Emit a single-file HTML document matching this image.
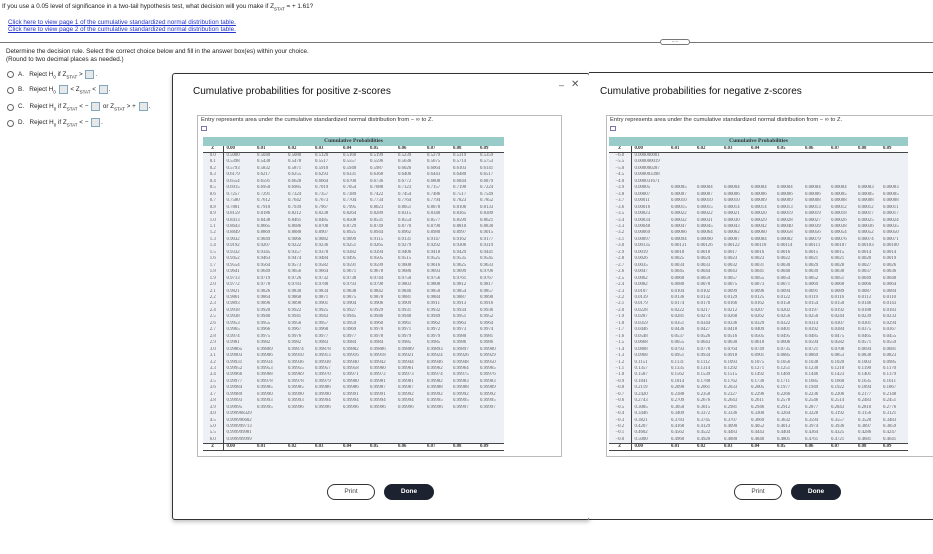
<!DOCTYPE html>
<html><head><meta charset="utf-8">
<style>
*{margin:0;padding:0;box-sizing:border-box}
body{width:933px;height:554px;background:#fff;position:relative;overflow:hidden;font-family:"Liberation Sans",sans-serif;color:#222}
.a{position:absolute;white-space:nowrap}
.t{font-size:6.3px}
.lnk{color:#2233cc;text-decoration:underline;font-size:6.3px}
.rad{position:absolute;width:7px;height:7px;border:1px solid #666;border-radius:50%}
.box{display:inline-block;width:9px;height:9px;border:1px solid #7fa8c0;background:#e8e8e8;vertical-align:middle;margin:0 1px}
sub{font-size:4.5px}
.win{position:absolute;border:1px solid #333;background:#fff;border-radius:3px;box-shadow:0 2px 4px rgba(0,0,0,.25)}
.ttl{font-size:10px;color:#111}
.entry{position:absolute;border:1px solid #bbb;background:#fff}
.band{position:absolute;background:#99cbc9;font-family:"Liberation Serif",serif;font-weight:bold;font-size:5.5px;text-align:center;line-height:9px;color:#333}
table{position:absolute;border-collapse:collapse;table-layout:fixed;font-family:"Liberation Serif",serif;font-size:4.8px;color:#555}
td{height:6.45px;line-height:6.45px;padding:0;white-space:nowrap;overflow:hidden}
td:first-child{text-align:center;border-right:1px solid #444}
td:nth-child(2){padding-left:3px}
tbody{background:#edf1f5}
thead td,tfoot td{height:6px;line-height:6px;font-weight:bold;color:#333;background:#fff}
thead tr{border-bottom:1px solid #444}
tfoot tr{border-top:1px solid #444;border-bottom:1px solid #444}
tfoot td{height:7px}
.btn{position:absolute;height:16px;border-radius:8px;font-size:6.5px;text-align:center;line-height:14px}
.pr{border:1px solid #333;background:#fff;color:#444}
.dn{background:#1c2230;color:#fff;font-weight:bold;line-height:16px}
</style></head><body>

<div class="a t" style="left:2px;top:3px">If you use a 0.05 level of significance in a two-tail hypothesis test, what decision will you make if Z<sub>STAT</sub> = + 1.61?</div>
<div class="a lnk" style="left:8px;top:19px">Click here to view page 1 of the cumulative standardized normal distribution table.</div>
<div class="a lnk" style="left:8px;top:26px">Click here to view page 2 of the cumulative standardized normal distribution table.</div>
<div class="a" style="left:0;top:42px;width:660px;height:1px;background:#777"></div>
<div class="a" style="left:660px;top:39px;width:30px;height:6px;border:1px solid #777;border-radius:3px;font-size:5px;line-height:3px;text-align:center;color:#555">.....</div>
<div class="a" style="left:690px;top:42px;width:243px;height:1px;background:#777"></div>

<div class="a t" style="left:6px;top:48px">Determine the decision rule. Select the correct choice below and fill in the answer box(es) within your choice.</div>
<div class="a t" style="left:6px;top:56px">(Round to two decimal places as needed.)</div>

<div class="rad" style="left:7px;top:71px"></div>
<div class="a t" style="left:18px;top:70px;line-height:10px">A.&nbsp;&nbsp;&nbsp;Reject H<sub>0</sub> if Z<sub>STAT</sub> &gt; <span class="box"></span>.</div>
<div class="rad" style="left:7px;top:87px"></div>
<div class="a t" style="left:18px;top:85px;line-height:10px">B.&nbsp;&nbsp;&nbsp;Reject H<sub>0</sub> <span class="box"></span> &lt; Z<sub>STAT</sub> &lt; <span class="box"></span>.</div>
<div class="rad" style="left:7px;top:104px"></div>
<div class="a t" style="left:18px;top:102px;line-height:10px">C.&nbsp;&nbsp;&nbsp;Reject H<sub>0</sub> if Z<sub>STAT</sub> &lt; &minus; <span class="box"></span> or Z<sub>STAT</sub> &gt; + <span class="box"></span>.</div>
<div class="rad" style="left:7px;top:120px"></div>
<div class="a t" style="left:18px;top:118px;line-height:10px">D.&nbsp;&nbsp;&nbsp;Reject H<sub>0</sub> if Z<sub>STAT</sub> &lt; &minus; <span class="box"></span>.</div>

<!-- left window -->
<div class="win" style="left:172px;top:73px;width:418px;height:447px"></div>
<div class="a" style="left:559px;top:80px;font-size:9px;color:#555">&ndash;</div>
<div class="a" style="left:571px;top:79px;font-size:10px;color:#555">&#x2715;</div>
<div class="a ttl" style="left:193px;top:86px">Cumulative probabilities for positive z-scores</div>
<div class="entry" style="left:197px;top:115px;width:365px;height:342px"></div>
<div class="a" style="left:201px;top:117px;font-size:5.8px;color:#333">Entry represents area under the cumulative standardized normal distribution from &minus; &infin; to Z.</div>
<div class="a" style="left:201px;top:126px;width:6px;height:5px;border:1px solid #77a"></div>
<div class="band" style="left:203px;top:137px;width:301px;height:9px">Cumulative Probabilities</div>
<table style="left:203px;top:146px;width:301px">
<colgroup><col style="width:20px"><col style="width:34px"><col style="width:31px"><col style="width:27px"><col style="width:28px"><col style="width:27px"><col style="width:28px"><col style="width:29px"><col style="width:26px"><col style="width:27px"><col style="width:24px"></colgroup>
<thead><tr><td>Z</td><td>0.00</td><td>0.01</td><td>0.02</td><td>0.03</td><td>0.04</td><td>0.05</td><td>0.06</td><td>0.07</td><td>0.08</td><td>0.09</td></tr></thead>
<tbody>
<tr><td>0.0</td><td>0.5000</td><td>0.5040</td><td>0.5080</td><td>0.5120</td><td>0.5160</td><td>0.5199</td><td>0.5239</td><td>0.5279</td><td>0.5319</td><td>0.5359</td></tr>
<tr><td>0.1</td><td>0.5398</td><td>0.5438</td><td>0.5478</td><td>0.5517</td><td>0.5557</td><td>0.5596</td><td>0.5636</td><td>0.5675</td><td>0.5714</td><td>0.5753</td></tr>
<tr><td>0.2</td><td>0.5793</td><td>0.5832</td><td>0.5871</td><td>0.5910</td><td>0.5948</td><td>0.5987</td><td>0.6026</td><td>0.6064</td><td>0.6103</td><td>0.6141</td></tr>
<tr><td>0.3</td><td>0.6179</td><td>0.6217</td><td>0.6255</td><td>0.6293</td><td>0.6331</td><td>0.6368</td><td>0.6406</td><td>0.6443</td><td>0.6480</td><td>0.6517</td></tr>
<tr><td>0.4</td><td>0.6554</td><td>0.6591</td><td>0.6628</td><td>0.6664</td><td>0.6700</td><td>0.6736</td><td>0.6772</td><td>0.6808</td><td>0.6844</td><td>0.6879</td></tr>
<tr><td>0.5</td><td>0.6915</td><td>0.6950</td><td>0.6985</td><td>0.7019</td><td>0.7054</td><td>0.7088</td><td>0.7123</td><td>0.7157</td><td>0.7190</td><td>0.7224</td></tr>
<tr><td>0.6</td><td>0.7257</td><td>0.7291</td><td>0.7324</td><td>0.7357</td><td>0.7389</td><td>0.7422</td><td>0.7454</td><td>0.7486</td><td>0.7517</td><td>0.7549</td></tr>
<tr><td>0.7</td><td>0.7580</td><td>0.7612</td><td>0.7642</td><td>0.7673</td><td>0.7704</td><td>0.7734</td><td>0.7764</td><td>0.7794</td><td>0.7823</td><td>0.7852</td></tr>
<tr><td>0.8</td><td>0.7881</td><td>0.7910</td><td>0.7939</td><td>0.7967</td><td>0.7995</td><td>0.8023</td><td>0.8051</td><td>0.8078</td><td>0.8106</td><td>0.8133</td></tr>
<tr><td>0.9</td><td>0.8159</td><td>0.8186</td><td>0.8212</td><td>0.8238</td><td>0.8264</td><td>0.8289</td><td>0.8315</td><td>0.8340</td><td>0.8365</td><td>0.8389</td></tr>
<tr><td>1.0</td><td>0.8413</td><td>0.8438</td><td>0.8461</td><td>0.8485</td><td>0.8508</td><td>0.8531</td><td>0.8554</td><td>0.8577</td><td>0.8599</td><td>0.8621</td></tr>
<tr><td>1.1</td><td>0.8643</td><td>0.8665</td><td>0.8686</td><td>0.8708</td><td>0.8729</td><td>0.8749</td><td>0.8770</td><td>0.8790</td><td>0.8810</td><td>0.8830</td></tr>
<tr><td>1.2</td><td>0.8849</td><td>0.8869</td><td>0.8888</td><td>0.8907</td><td>0.8925</td><td>0.8944</td><td>0.8962</td><td>0.8980</td><td>0.8997</td><td>0.9015</td></tr>
<tr><td>1.3</td><td>0.9032</td><td>0.9049</td><td>0.9066</td><td>0.9082</td><td>0.9099</td><td>0.9115</td><td>0.9131</td><td>0.9147</td><td>0.9162</td><td>0.9177</td></tr>
<tr><td>1.4</td><td>0.9192</td><td>0.9207</td><td>0.9222</td><td>0.9236</td><td>0.9251</td><td>0.9265</td><td>0.9279</td><td>0.9292</td><td>0.9306</td><td>0.9319</td></tr>
<tr><td>1.5</td><td>0.9332</td><td>0.9345</td><td>0.9357</td><td>0.9370</td><td>0.9382</td><td>0.9394</td><td>0.9406</td><td>0.9418</td><td>0.9429</td><td>0.9441</td></tr>
<tr><td>1.6</td><td>0.9452</td><td>0.9463</td><td>0.9474</td><td>0.9484</td><td>0.9495</td><td>0.9505</td><td>0.9515</td><td>0.9525</td><td>0.9535</td><td>0.9545</td></tr>
<tr><td>1.7</td><td>0.9554</td><td>0.9564</td><td>0.9573</td><td>0.9582</td><td>0.9591</td><td>0.9599</td><td>0.9608</td><td>0.9616</td><td>0.9625</td><td>0.9633</td></tr>
<tr><td>1.8</td><td>0.9641</td><td>0.9649</td><td>0.9656</td><td>0.9664</td><td>0.9671</td><td>0.9678</td><td>0.9686</td><td>0.9693</td><td>0.9699</td><td>0.9706</td></tr>
<tr><td>1.9</td><td>0.9713</td><td>0.9719</td><td>0.9726</td><td>0.9732</td><td>0.9738</td><td>0.9744</td><td>0.9750</td><td>0.9756</td><td>0.9761</td><td>0.9767</td></tr>
<tr><td>2.0</td><td>0.9772</td><td>0.9778</td><td>0.9783</td><td>0.9788</td><td>0.9793</td><td>0.9798</td><td>0.9803</td><td>0.9808</td><td>0.9812</td><td>0.9817</td></tr>
<tr><td>2.1</td><td>0.9821</td><td>0.9826</td><td>0.9830</td><td>0.9834</td><td>0.9838</td><td>0.9842</td><td>0.9846</td><td>0.9850</td><td>0.9854</td><td>0.9857</td></tr>
<tr><td>2.2</td><td>0.9861</td><td>0.9864</td><td>0.9868</td><td>0.9871</td><td>0.9875</td><td>0.9878</td><td>0.9881</td><td>0.9884</td><td>0.9887</td><td>0.9890</td></tr>
<tr><td>2.3</td><td>0.9893</td><td>0.9896</td><td>0.9898</td><td>0.9901</td><td>0.9904</td><td>0.9906</td><td>0.9909</td><td>0.9911</td><td>0.9913</td><td>0.9916</td></tr>
<tr><td>2.4</td><td>0.9918</td><td>0.9920</td><td>0.9922</td><td>0.9925</td><td>0.9927</td><td>0.9929</td><td>0.9931</td><td>0.9932</td><td>0.9934</td><td>0.9936</td></tr>
<tr><td>2.5</td><td>0.9938</td><td>0.9940</td><td>0.9941</td><td>0.9943</td><td>0.9945</td><td>0.9946</td><td>0.9948</td><td>0.9949</td><td>0.9951</td><td>0.9952</td></tr>
<tr><td>2.6</td><td>0.9953</td><td>0.9955</td><td>0.9956</td><td>0.9957</td><td>0.9959</td><td>0.9960</td><td>0.9961</td><td>0.9962</td><td>0.9963</td><td>0.9964</td></tr>
<tr><td>2.7</td><td>0.9965</td><td>0.9966</td><td>0.9967</td><td>0.9968</td><td>0.9969</td><td>0.9970</td><td>0.9971</td><td>0.9972</td><td>0.9973</td><td>0.9974</td></tr>
<tr><td>2.8</td><td>0.9974</td><td>0.9975</td><td>0.9976</td><td>0.9977</td><td>0.9977</td><td>0.9978</td><td>0.9979</td><td>0.9979</td><td>0.9980</td><td>0.9981</td></tr>
<tr><td>2.9</td><td>0.9981</td><td>0.9982</td><td>0.9982</td><td>0.9983</td><td>0.9984</td><td>0.9984</td><td>0.9985</td><td>0.9985</td><td>0.9986</td><td>0.9986</td></tr>
<tr><td>3.0</td><td>0.99865</td><td>0.99869</td><td>0.99874</td><td>0.99878</td><td>0.99882</td><td>0.99886</td><td>0.99889</td><td>0.99893</td><td>0.99897</td><td>0.99900</td></tr>
<tr><td>3.1</td><td>0.99903</td><td>0.99906</td><td>0.99910</td><td>0.99913</td><td>0.99916</td><td>0.99918</td><td>0.99921</td><td>0.99924</td><td>0.99926</td><td>0.99929</td></tr>
<tr><td>3.2</td><td>0.99931</td><td>0.99934</td><td>0.99936</td><td>0.99938</td><td>0.99940</td><td>0.99942</td><td>0.99944</td><td>0.99946</td><td>0.99948</td><td>0.99950</td></tr>
<tr><td>3.3</td><td>0.99952</td><td>0.99953</td><td>0.99955</td><td>0.99957</td><td>0.99958</td><td>0.99960</td><td>0.99961</td><td>0.99962</td><td>0.99964</td><td>0.99965</td></tr>
<tr><td>3.4</td><td>0.99966</td><td>0.99968</td><td>0.99969</td><td>0.99970</td><td>0.99971</td><td>0.99972</td><td>0.99973</td><td>0.99974</td><td>0.99975</td><td>0.99976</td></tr>
<tr><td>3.5</td><td>0.99977</td><td>0.99978</td><td>0.99978</td><td>0.99979</td><td>0.99980</td><td>0.99981</td><td>0.99981</td><td>0.99982</td><td>0.99983</td><td>0.99983</td></tr>
<tr><td>3.6</td><td>0.99984</td><td>0.99985</td><td>0.99985</td><td>0.99986</td><td>0.99986</td><td>0.99987</td><td>0.99987</td><td>0.99988</td><td>0.99988</td><td>0.99989</td></tr>
<tr><td>3.7</td><td>0.99989</td><td>0.99990</td><td>0.99990</td><td>0.99990</td><td>0.99991</td><td>0.99991</td><td>0.99992</td><td>0.99992</td><td>0.99992</td><td>0.99992</td></tr>
<tr><td>3.8</td><td>0.99993</td><td>0.99993</td><td>0.99993</td><td>0.99994</td><td>0.99994</td><td>0.99994</td><td>0.99994</td><td>0.99995</td><td>0.99995</td><td>0.99995</td></tr>
<tr><td>3.9</td><td>0.99995</td><td>0.99995</td><td>0.99996</td><td>0.99996</td><td>0.99996</td><td>0.99996</td><td>0.99996</td><td>0.99996</td><td>0.99997</td><td>0.99997</td></tr>
<tr><td>4.0</td><td>0.999968329</td><td></td><td></td><td></td><td></td><td></td><td></td><td></td><td></td><td></td></tr>
<tr><td>4.5</td><td>0.999996602</td><td></td><td></td><td></td><td></td><td></td><td></td><td></td><td></td><td></td></tr>
<tr><td>5.0</td><td>0.999999713</td><td></td><td></td><td></td><td></td><td></td><td></td><td></td><td></td><td></td></tr>
<tr><td>5.5</td><td>0.999999981</td><td></td><td></td><td></td><td></td><td></td><td></td><td></td><td></td><td></td></tr>
<tr><td>6.0</td><td>0.999999999</td><td></td><td></td><td></td><td></td><td></td><td></td><td></td><td></td><td></td></tr>
</tbody>
<tfoot><tr><td>Z</td><td>0.00</td><td>0.01</td><td>0.02</td><td>0.03</td><td>0.04</td><td>0.05</td><td>0.06</td><td>0.07</td><td>0.08</td><td>0.09</td></tr></tfoot>
</table>
<div class="btn pr" style="left:327px;top:484px;width:48px">Print</div>
<div class="btn dn" style="left:384px;top:484px;width:50px">Done</div>

<!-- right window -->
<div class="a" style="left:589px;top:72px;width:344px;height:448px;background:#fff;border-top:1px solid #333;border-bottom:1px solid #333"></div>
<div class="a ttl" style="left:600px;top:86px">Cumulative probabilities for negative z-scores</div>
<div class="entry" style="left:606px;top:115px;width:330px;height:342px"></div>
<div class="a" style="left:610px;top:117px;font-size:5.8px;color:#333">Entry represents area under the cumulative standardized normal distribution from &minus; &infin; to Z.</div>
<div class="a" style="left:610px;top:126px;width:6px;height:5px;border:1px solid #77a"></div>
<div class="band" style="left:609px;top:137px;width:299px;height:9px">Cumulative Probabilities</div>
<table style="left:609px;top:146px;width:299px">
<colgroup><col style="width:22px"><col style="width:40px"><col style="width:26px"><col style="width:27px"><col style="width:27px"><col style="width:26px"><col style="width:28px"><col style="width:26px"><col style="width:27px"><col style="width:25px"><col style="width:25px"></colgroup>
<thead><tr><td>Z</td><td>0.00</td><td>0.01</td><td>0.02</td><td>0.03</td><td>0.04</td><td>0.05</td><td>0.06</td><td>0.07</td><td>0.08</td><td>0.09</td></tr></thead>
<tbody>
<tr><td>&minus;6.0</td><td>0.000000001</td><td></td><td></td><td></td><td></td><td></td><td></td><td></td><td></td><td></td></tr>
<tr><td>&minus;5.5</td><td>0.000000019</td><td></td><td></td><td></td><td></td><td></td><td></td><td></td><td></td><td></td></tr>
<tr><td>&minus;5.0</td><td>0.000000287</td><td></td><td></td><td></td><td></td><td></td><td></td><td></td><td></td><td></td></tr>
<tr><td>&minus;4.5</td><td>0.000003398</td><td></td><td></td><td></td><td></td><td></td><td></td><td></td><td></td><td></td></tr>
<tr><td>&minus;4.0</td><td>0.000031671</td><td></td><td></td><td></td><td></td><td></td><td></td><td></td><td></td><td></td></tr>
<tr><td>&minus;3.9</td><td>0.00005</td><td>0.00005</td><td>0.00004</td><td>0.00004</td><td>0.00004</td><td>0.00004</td><td>0.00004</td><td>0.00004</td><td>0.00003</td><td>0.00003</td></tr>
<tr><td>&minus;3.8</td><td>0.00007</td><td>0.00007</td><td>0.00007</td><td>0.00006</td><td>0.00006</td><td>0.00006</td><td>0.00006</td><td>0.00005</td><td>0.00005</td><td>0.00005</td></tr>
<tr><td>&minus;3.7</td><td>0.00011</td><td>0.00010</td><td>0.00010</td><td>0.00010</td><td>0.00009</td><td>0.00009</td><td>0.00008</td><td>0.00008</td><td>0.00008</td><td>0.00008</td></tr>
<tr><td>&minus;3.6</td><td>0.00016</td><td>0.00015</td><td>0.00015</td><td>0.00014</td><td>0.00014</td><td>0.00013</td><td>0.00013</td><td>0.00012</td><td>0.00012</td><td>0.00011</td></tr>
<tr><td>&minus;3.5</td><td>0.00023</td><td>0.00022</td><td>0.00022</td><td>0.00021</td><td>0.00020</td><td>0.00019</td><td>0.00019</td><td>0.00018</td><td>0.00017</td><td>0.00017</td></tr>
<tr><td>&minus;3.4</td><td>0.00034</td><td>0.00032</td><td>0.00031</td><td>0.00030</td><td>0.00029</td><td>0.00028</td><td>0.00027</td><td>0.00026</td><td>0.00025</td><td>0.00024</td></tr>
<tr><td>&minus;3.3</td><td>0.00048</td><td>0.00047</td><td>0.00045</td><td>0.00043</td><td>0.00042</td><td>0.00040</td><td>0.00039</td><td>0.00038</td><td>0.00036</td><td>0.00035</td></tr>
<tr><td>&minus;3.2</td><td>0.00069</td><td>0.00066</td><td>0.00064</td><td>0.00062</td><td>0.00060</td><td>0.00058</td><td>0.00056</td><td>0.00054</td><td>0.00052</td><td>0.00050</td></tr>
<tr><td>&minus;3.1</td><td>0.00097</td><td>0.00094</td><td>0.00090</td><td>0.00087</td><td>0.00084</td><td>0.00082</td><td>0.00079</td><td>0.00076</td><td>0.00074</td><td>0.00071</td></tr>
<tr><td>&minus;3.0</td><td>0.00135</td><td>0.00131</td><td>0.00126</td><td>0.00122</td><td>0.00118</td><td>0.00114</td><td>0.00111</td><td>0.00107</td><td>0.00103</td><td>0.00100</td></tr>
<tr><td>&minus;2.9</td><td>0.0019</td><td>0.0018</td><td>0.0018</td><td>0.0017</td><td>0.0016</td><td>0.0016</td><td>0.0015</td><td>0.0015</td><td>0.0014</td><td>0.0014</td></tr>
<tr><td>&minus;2.8</td><td>0.0026</td><td>0.0025</td><td>0.0024</td><td>0.0023</td><td>0.0023</td><td>0.0022</td><td>0.0021</td><td>0.0021</td><td>0.0020</td><td>0.0019</td></tr>
<tr><td>&minus;2.7</td><td>0.0035</td><td>0.0034</td><td>0.0033</td><td>0.0032</td><td>0.0031</td><td>0.0030</td><td>0.0029</td><td>0.0028</td><td>0.0027</td><td>0.0026</td></tr>
<tr><td>&minus;2.6</td><td>0.0047</td><td>0.0045</td><td>0.0044</td><td>0.0043</td><td>0.0041</td><td>0.0040</td><td>0.0039</td><td>0.0038</td><td>0.0037</td><td>0.0036</td></tr>
<tr><td>&minus;2.5</td><td>0.0062</td><td>0.0060</td><td>0.0059</td><td>0.0057</td><td>0.0055</td><td>0.0054</td><td>0.0052</td><td>0.0051</td><td>0.0049</td><td>0.0048</td></tr>
<tr><td>&minus;2.4</td><td>0.0082</td><td>0.0080</td><td>0.0078</td><td>0.0075</td><td>0.0073</td><td>0.0071</td><td>0.0069</td><td>0.0068</td><td>0.0066</td><td>0.0064</td></tr>
<tr><td>&minus;2.3</td><td>0.0107</td><td>0.0104</td><td>0.0102</td><td>0.0099</td><td>0.0096</td><td>0.0094</td><td>0.0091</td><td>0.0089</td><td>0.0087</td><td>0.0084</td></tr>
<tr><td>&minus;2.2</td><td>0.0139</td><td>0.0136</td><td>0.0132</td><td>0.0129</td><td>0.0125</td><td>0.0122</td><td>0.0119</td><td>0.0116</td><td>0.0113</td><td>0.0110</td></tr>
<tr><td>&minus;2.1</td><td>0.0179</td><td>0.0174</td><td>0.0170</td><td>0.0166</td><td>0.0162</td><td>0.0158</td><td>0.0154</td><td>0.0150</td><td>0.0146</td><td>0.0143</td></tr>
<tr><td>&minus;2.0</td><td>0.0228</td><td>0.0222</td><td>0.0217</td><td>0.0212</td><td>0.0207</td><td>0.0202</td><td>0.0197</td><td>0.0192</td><td>0.0188</td><td>0.0183</td></tr>
<tr><td>&minus;1.9</td><td>0.0287</td><td>0.0281</td><td>0.0274</td><td>0.0268</td><td>0.0262</td><td>0.0256</td><td>0.0250</td><td>0.0244</td><td>0.0239</td><td>0.0233</td></tr>
<tr><td>&minus;1.8</td><td>0.0359</td><td>0.0351</td><td>0.0344</td><td>0.0336</td><td>0.0329</td><td>0.0322</td><td>0.0314</td><td>0.0307</td><td>0.0301</td><td>0.0294</td></tr>
<tr><td>&minus;1.7</td><td>0.0446</td><td>0.0436</td><td>0.0427</td><td>0.0418</td><td>0.0409</td><td>0.0401</td><td>0.0392</td><td>0.0384</td><td>0.0375</td><td>0.0367</td></tr>
<tr><td>&minus;1.6</td><td>0.0548</td><td>0.0537</td><td>0.0526</td><td>0.0516</td><td>0.0505</td><td>0.0495</td><td>0.0485</td><td>0.0475</td><td>0.0465</td><td>0.0455</td></tr>
<tr><td>&minus;1.5</td><td>0.0668</td><td>0.0655</td><td>0.0643</td><td>0.0630</td><td>0.0618</td><td>0.0606</td><td>0.0594</td><td>0.0582</td><td>0.0571</td><td>0.0559</td></tr>
<tr><td>&minus;1.4</td><td>0.0808</td><td>0.0793</td><td>0.0778</td><td>0.0764</td><td>0.0749</td><td>0.0735</td><td>0.0721</td><td>0.0708</td><td>0.0694</td><td>0.0681</td></tr>
<tr><td>&minus;1.3</td><td>0.0968</td><td>0.0951</td><td>0.0934</td><td>0.0918</td><td>0.0901</td><td>0.0885</td><td>0.0869</td><td>0.0853</td><td>0.0838</td><td>0.0823</td></tr>
<tr><td>&minus;1.2</td><td>0.1151</td><td>0.1131</td><td>0.1112</td><td>0.1093</td><td>0.1075</td><td>0.1056</td><td>0.1038</td><td>0.1020</td><td>0.1003</td><td>0.0985</td></tr>
<tr><td>&minus;1.1</td><td>0.1357</td><td>0.1335</td><td>0.1314</td><td>0.1292</td><td>0.1271</td><td>0.1251</td><td>0.1230</td><td>0.1210</td><td>0.1190</td><td>0.1170</td></tr>
<tr><td>&minus;1.0</td><td>0.1587</td><td>0.1562</td><td>0.1539</td><td>0.1515</td><td>0.1492</td><td>0.1469</td><td>0.1446</td><td>0.1423</td><td>0.1401</td><td>0.1379</td></tr>
<tr><td>&minus;0.9</td><td>0.1841</td><td>0.1814</td><td>0.1788</td><td>0.1762</td><td>0.1736</td><td>0.1711</td><td>0.1685</td><td>0.1660</td><td>0.1635</td><td>0.1611</td></tr>
<tr><td>&minus;0.8</td><td>0.2119</td><td>0.2090</td><td>0.2061</td><td>0.2033</td><td>0.2005</td><td>0.1977</td><td>0.1949</td><td>0.1922</td><td>0.1894</td><td>0.1867</td></tr>
<tr><td>&minus;0.7</td><td>0.2420</td><td>0.2388</td><td>0.2358</td><td>0.2327</td><td>0.2296</td><td>0.2266</td><td>0.2236</td><td>0.2206</td><td>0.2177</td><td>0.2148</td></tr>
<tr><td>&minus;0.6</td><td>0.2743</td><td>0.2709</td><td>0.2676</td><td>0.2643</td><td>0.2611</td><td>0.2578</td><td>0.2546</td><td>0.2514</td><td>0.2483</td><td>0.2451</td></tr>
<tr><td>&minus;0.5</td><td>0.3085</td><td>0.3050</td><td>0.3015</td><td>0.2981</td><td>0.2946</td><td>0.2912</td><td>0.2877</td><td>0.2843</td><td>0.2810</td><td>0.2776</td></tr>
<tr><td>&minus;0.4</td><td>0.3446</td><td>0.3409</td><td>0.3372</td><td>0.3336</td><td>0.3300</td><td>0.3264</td><td>0.3228</td><td>0.3192</td><td>0.3156</td><td>0.3121</td></tr>
<tr><td>&minus;0.3</td><td>0.3821</td><td>0.3783</td><td>0.3745</td><td>0.3707</td><td>0.3669</td><td>0.3632</td><td>0.3594</td><td>0.3557</td><td>0.3520</td><td>0.3483</td></tr>
<tr><td>&minus;0.2</td><td>0.4207</td><td>0.4168</td><td>0.4129</td><td>0.4090</td><td>0.4052</td><td>0.4013</td><td>0.3974</td><td>0.3936</td><td>0.3897</td><td>0.3859</td></tr>
<tr><td>&minus;0.1</td><td>0.4602</td><td>0.4562</td><td>0.4522</td><td>0.4483</td><td>0.4443</td><td>0.4404</td><td>0.4364</td><td>0.4325</td><td>0.4286</td><td>0.4247</td></tr>
<tr><td>&minus;0.0</td><td>0.5000</td><td>0.4960</td><td>0.4920</td><td>0.4880</td><td>0.4840</td><td>0.4801</td><td>0.4761</td><td>0.4721</td><td>0.4681</td><td>0.4641</td></tr>
</tbody>
<tfoot><tr><td>Z</td><td>0.00</td><td>0.01</td><td>0.02</td><td>0.03</td><td>0.04</td><td>0.05</td><td>0.06</td><td>0.07</td><td>0.08</td><td>0.09</td></tr></tfoot>
</table>
<div class="btn pr" style="left:734px;top:484px;width:48px">Print</div>
<div class="btn dn" style="left:791px;top:484px;width:50px">Done</div>
</body></html>
